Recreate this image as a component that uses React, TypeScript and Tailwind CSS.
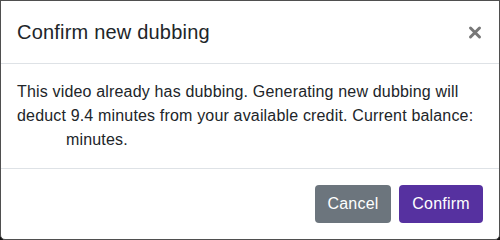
import { X } from 'lucide-react'

export default function App() {
  return (
    <div className="h-[240px] w-[500px] bg-[#111] font-['Liberation_Sans',Arial,sans-serif] text-[#212529]">
      <div className="flex h-full w-full flex-col rounded-b-[5px] border border-[#4f4f4f] bg-white">
        {/* header */}
        <div className="flex items-start justify-between border-b border-[#dee2e6] p-4">
          <h5 className="text-[20px] font-medium leading-[30px] tracking-[0.2px]">Confirm new dubbing</h5>
          <button className="-mr-[1px] mt-[4px] flex h-[22px] w-[18px] items-center justify-center text-[#777]">
            <X size={19} strokeWidth={4} />
          </button>
        </div>

        {/* body */}
        <div className="flex-1 p-4 text-[16px] leading-6 tracking-[0.17px]">
          This video already has dubbing. Generating new dubbing will deduct 9.4 minutes from your available credit. Current balance:{' '}
          <span className="inline-block w-[49px]"></span>minutes.
        </div>

        {/* footer */}
        <div className="flex items-center justify-end gap-2 border-t border-[#dee2e6] px-4 py-4">
          <button className="h-[38px] w-[76px] rounded-[4px] bg-[#6c757d] text-[16px] tracking-[0.2px] text-white">Cancel</button>
          <button className="h-[38px] w-[84px] rounded-[4px] bg-[#5631a0] text-[16px] tracking-[0.2px] text-white">Confirm</button>
        </div>
      </div>
    </div>
  )
}
